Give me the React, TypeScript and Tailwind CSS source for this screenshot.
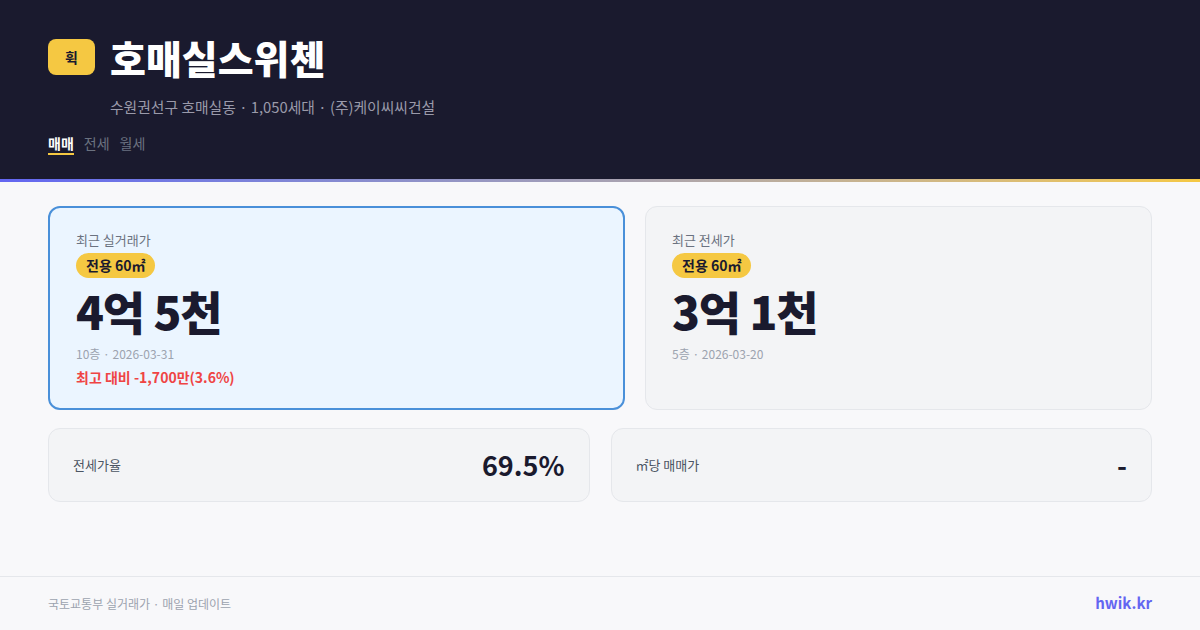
export default function App() {
  const font = { fontFamily: '"Noto Sans CJK KR", "Noto Sans", sans-serif' };

  return (
    <div className="w-[1200px] h-[630px] flex flex-col bg-[#f8f8fa] overflow-hidden" style={font}>
      {/* Header */}
      <div className="h-[179px] bg-[#1a1a2e] px-12 pt-[35px]">
        <div className="flex items-center gap-[15px]">
          <div className="w-[47px] h-[36px] rounded-lg bg-[#f5c842] flex items-center justify-center text-[14px] font-bold text-[#1a1a2e]">
            휙
          </div>
          <h1 className="text-[39px] leading-[44px] font-black text-white">호매실스위첸</h1>
        </div>
        <p className="ml-[62px] mt-[18px] text-[14.8px] leading-[20px] text-[#9a9aaa]">
          수원권선구 호매실동 · 1,050세대 · (주)케이씨씨건설
        </p>
        <div className="mt-[17px] flex gap-[10px] text-[14px] leading-[18px]">
          <span className="font-bold text-white border-b-2 border-[#f5c842] pb-[1px]">매매</span>
          <span className="text-[#6b7280]">전세</span>
          <span className="text-[#6b7280]">월세</span>
        </div>
      </div>
      <div className="h-[3px] bg-gradient-to-r from-[#6366f1] to-[#f5c842]" />

      {/* Main */}
      <div className="flex-1 px-12 pt-6">
        <div className="flex gap-5 h-[204px]">
          {/* Recent trade */}
          <div className="w-[577px] rounded-xl border-2 border-[#4a90d9] bg-[#ebf5ff] px-[26px] pt-6">
            <p className="text-[13px] leading-4 text-[#6b7280]">최근 실거래가</p>
            <span className="mt-[5px] inline-flex h-[25px] items-center rounded-full bg-[#f5c842] px-[10px] text-[14px] font-bold text-[#1a1a2e]">
              전용 60㎡
            </span>
            <p className="mt-[2px] text-[46px] leading-[60px] font-black text-[#1a1a2e] tracking-tight">4억 5천</p>
            <p className="mt-[5px] text-[12px] leading-[18px] text-[#9ca3af]">10층 · 2026-03-31</p>
            <p className="mt-[4px] text-[14px] leading-5 font-semibold text-[#ef4444]">최고 대비 -1,700만(3.6%)</p>
          </div>

          {/* Recent jeonse */}
          <div className="flex-1 rounded-xl border border-[#e5e7eb] bg-[#f3f4f6] px-[26px] pt-[25px]">
            <p className="text-[13px] leading-4 text-[#6b7280]">최근 전세가</p>
            <span className="mt-[5px] inline-flex h-[25px] items-center rounded-full bg-[#f5c842] px-[10px] text-[14px] font-bold text-[#1a1a2e]">
              전용 60㎡
            </span>
            <p className="mt-[2px] text-[46px] leading-[60px] font-black text-[#1a1a2e] tracking-tight">3억 1천</p>
            <p className="mt-[5px] text-[12px] leading-[18px] text-[#9ca3af]">5층 · 2026-03-20</p>
          </div>
        </div>

        <div className="mt-[18px] grid grid-cols-2 gap-[21px]">
          <div className="h-[74px] rounded-xl border border-[#e5e7eb] bg-[#f3f4f6] px-6 flex items-center justify-between">
            <span className="text-[13px] text-[#4b5563]">전세가율</span>
            <span className="text-[27px] font-bold text-[#1a1a2e]">69.5%</span>
          </div>
          <div className="h-[74px] rounded-xl border border-[#e5e7eb] bg-[#f3f4f6] px-6 flex items-center justify-between">
            <span className="text-[13px] text-[#4b5563]">㎡당 매매가</span>
            <span className="text-[27px] font-bold text-[#1a1a2e]">-</span>
          </div>
        </div>
      </div>

      {/* Footer */}
      <div className="h-[54px] border-t border-[#e5e7eb] px-12 flex items-center justify-between">
        <span className="text-[12px] text-[#9ca3af]">국토교통부 실거래가 · 매일 업데이트</span>
        <span className="text-[15px] font-bold text-[#6366f1]">hwik.kr</span>
      </div>
    </div>
  );
}
